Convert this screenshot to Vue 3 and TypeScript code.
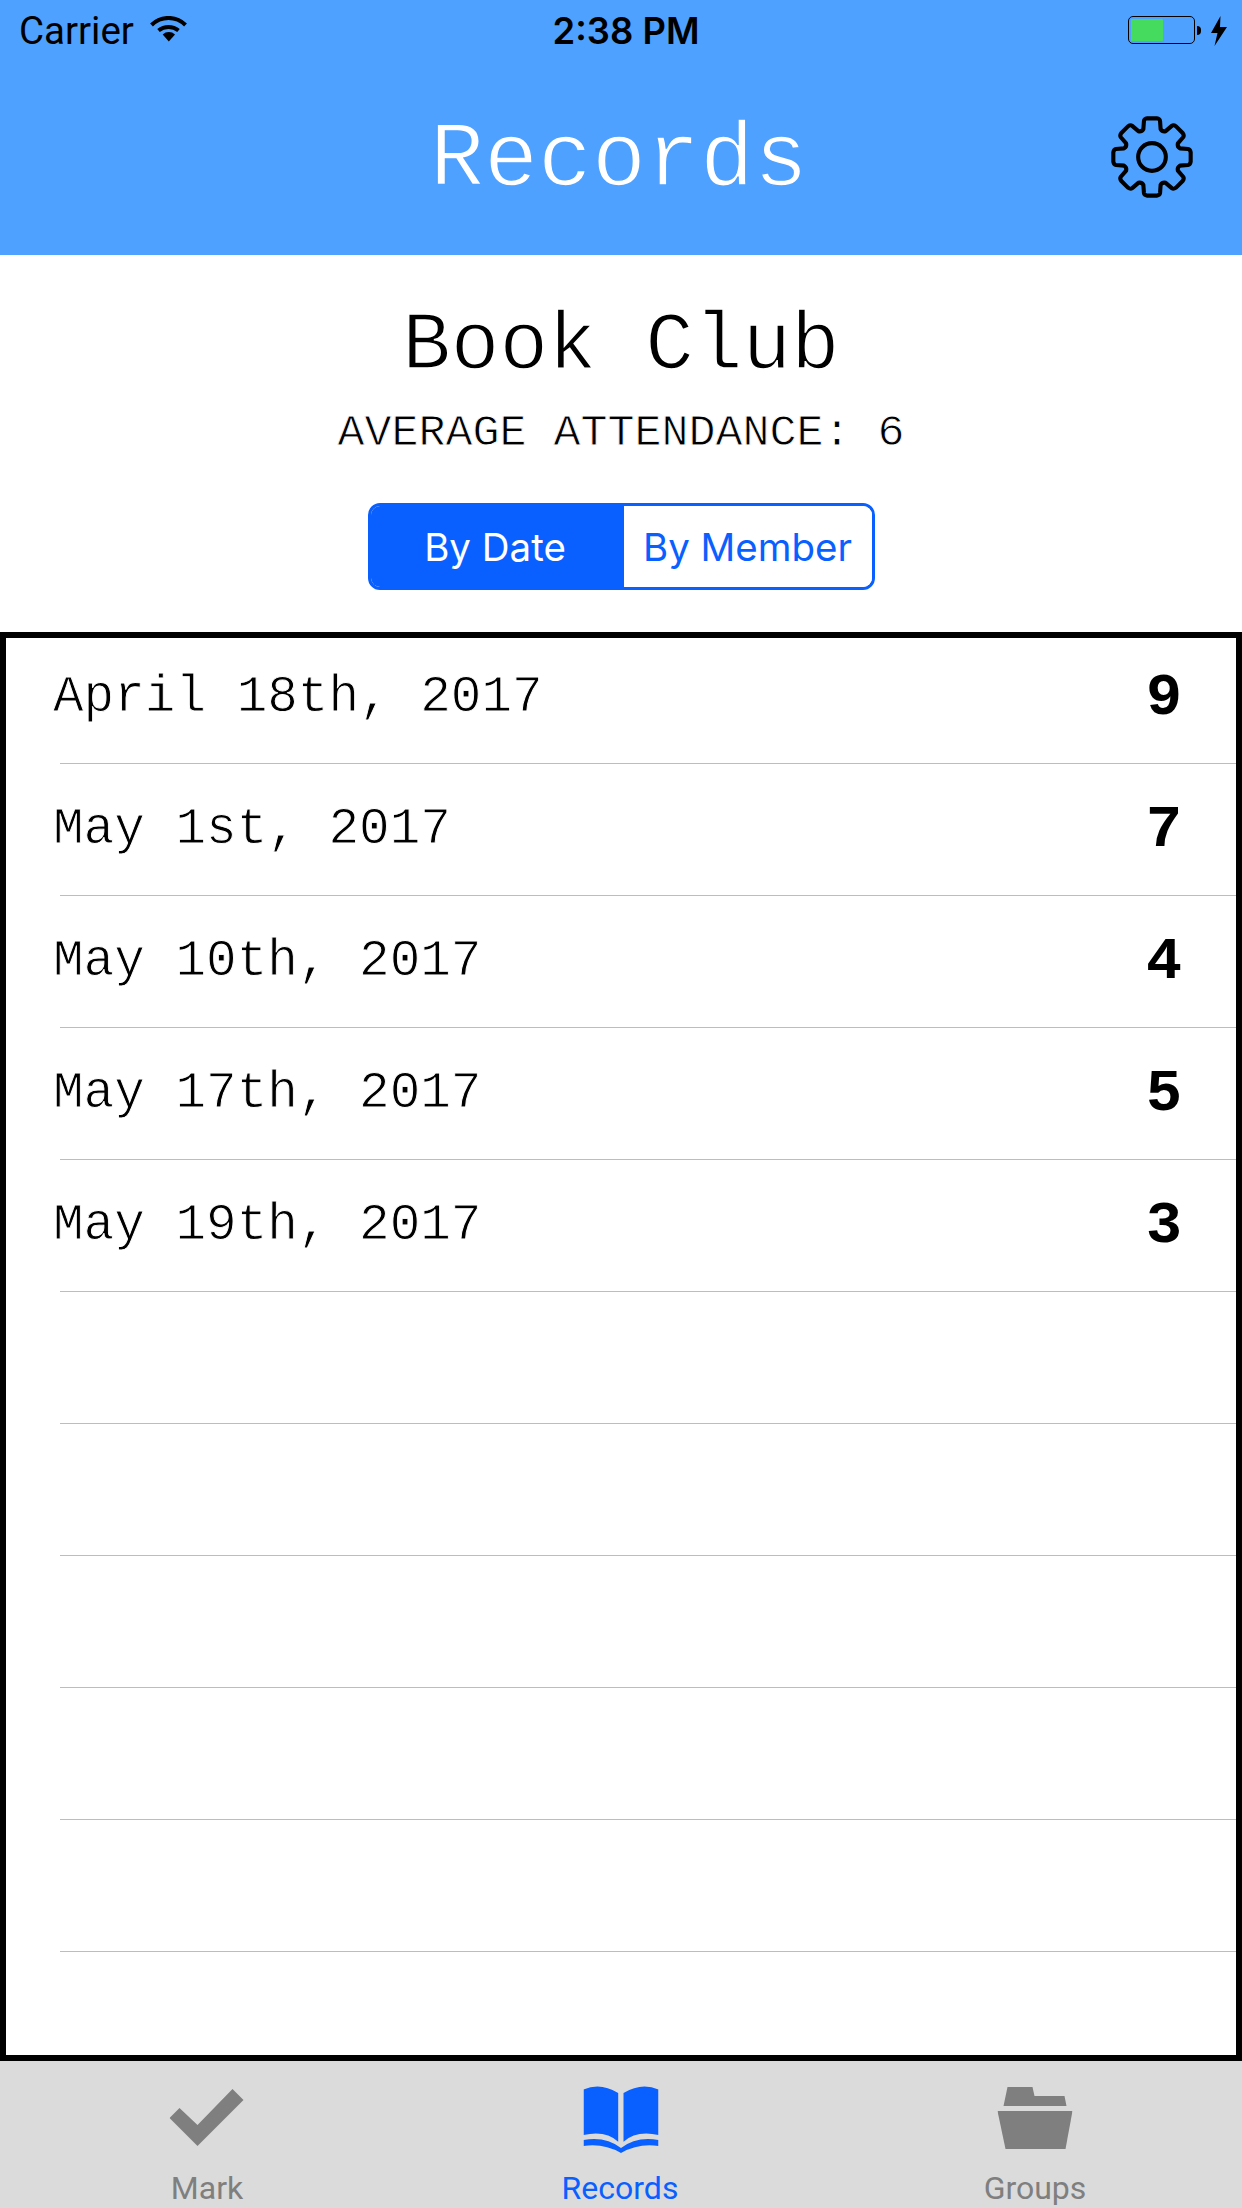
<script setup lang="ts">
interface RecordRow { date: string; count: string }
const records: RecordRow[] = [
  { date: 'April 18th, 2017', count: '9' },
  { date: 'May 1st, 2017', count: '7' },
  { date: 'May 10th, 2017', count: '4' },
  { date: 'May 17th, 2017', count: '5' },
  { date: 'May 19th, 2017', count: '3' },
  { date: '', count: '' },
  { date: '', count: '' },
  { date: '', count: '' },
  { date: '', count: '' },
  { date: '', count: '' },
  { date: '', count: '' },
]

function gearPath(): string {
  const c = 40
  const rOut = 38
  const rIn = 28.5
  const pt = (r: number, a: number) => `${(c + r * Math.sin(a)).toFixed(2)} ${(c - r * Math.cos(a)).toFixed(2)}`
  let d = ''
  for (let i = 0; i < 8; i++) {
    const a = (i * Math.PI) / 4
    const next = a + Math.PI / 4
    d += `${i === 0 ? 'M' : 'L'}${pt(rIn, a - 0.3)} L${pt(rOut - 2, a - 0.22)} Q${pt(rOut, a - 0.2)} ${pt(rOut, a - 0.12)} L${pt(rOut, a + 0.12)} Q${pt(rOut, a + 0.2)} ${pt(rOut - 2, a + 0.22)} L${pt(rIn, a + 0.3)} Q${pt(rIn - 2, (a + next) / 2)} ${pt(rIn, next - 0.3)} `
  }
  return d + 'Z'
}
const gear = gearPath()
</script>

<template>
  <div class="screen">
    <header class="header">
      <div class="status">
        <div class="status-left">
          <span>Carrier</span>
          <svg class="wifi" width="37" height="26" viewBox="0 0 37 26">
            <path d="M1.5 9 A24 24 0 0 1 35.5 9" fill="none" stroke="#000" stroke-width="4" />
            <path d="M8.5 14.5 A16 16 0 0 1 28.5 14.5" fill="none" stroke="#000" stroke-width="4" />
            <path d="M12.7 18.4 A9 9 0 0 1 25 18.4 L18.8 25.5 Z" fill="#000" />
          </svg>
        </div>
        <div class="status-time">2:38 PM</div>
        <div class="status-right">
          <div class="battery"><div class="battery-fill"></div></div>
          <div class="battery-nub"></div>
          <svg class="bolt" width="16" height="30" viewBox="0 0 16 30">
            <path d="M9.5 0 L0 17 H6.5 L3.5 30 L16 11 H9 Z" fill="#000" />
          </svg>
        </div>
      </div>
      <div class="nav">
        <h1 class="nav-title">Records</h1>
        <svg class="gear" width="82" height="82" viewBox="0 0 80 80">
          <path :d="gear" fill="none" stroke="#000" stroke-width="4" stroke-linejoin="round" />
          <circle cx="40" cy="40" r="13.5" fill="none" stroke="#000" stroke-width="4" />
        </svg>
      </div>
    </header>

    <section class="summary">
      <h2 class="group-name">Book Club</h2>
      <p class="average">AVERAGE ATTENDANCE: 6</p>
      <div class="segment">
        <div class="seg seg-on">By Date</div>
        <div class="seg seg-off">By Member</div>
      </div>
    </section>

    <section class="list">
      <div class="rows">
        <div v-for="(r, i) in records" :key="i" class="row">
          <span class="date">{{ r.date }}</span>
          <span class="count">{{ r.count }}</span>
        </div>
      </div>
    </section>

    <nav class="tabs">
      <div class="tab">
        <svg class="icon-check" width="75" height="58" viewBox="0 0 75 58">
          <path d="M0 29 L10 19 L28 36 L63 0 L74 11 L28 57 Z" fill="#7f7f7f" />
        </svg>
        <span>Mark</span>
      </div>
      <div class="tab tab-on">
        <svg class="icon-book" width="75" height="68" viewBox="0 0 75 68">
          <path d="M0 4.5 Q17 -3 34.7 8 V56.7 Q22 45 0 50 Z" fill="#0a60ff" />
          <path d="M75 4.5 Q58 -3 40 8 V56.7 Q53 45 75 50 Z" fill="#0a60ff" />
          <path d="M0 55 Q22 51 37.5 63 Q53 51 75 55 V61 Q55 58 37.5 68 Q20 58 0 61 Z" fill="#0a60ff" />
        </svg>
        <span>Records</span>
      </div>
      <div class="tab">
        <svg class="icon-folder" width="75" height="62" viewBox="0 0 75 62">
          <path d="M10 0 H35 L37 9 H67 L69 19 H6 Z" fill="#7f7f7f" />
          <path d="M0 24 H75 L68 62 H8 Z" fill="#7f7f7f" />
        </svg>
        <span>Groups</span>
      </div>
    </nav>
  </div>
</template>

<style>
html, body { margin: 0; background: #fff; }
</style>

<style scoped>
.screen {
  width: 1242px;
  height: 2208px;
  display: flex;
  flex-direction: column;
  overflow: hidden;
  background: #fff;
  font-family: "Liberation Mono", monospace;
}
.header {
  height: 255px;
  flex: none;
  background: #4fa1ff;
  display: flex;
  flex-direction: column;
}
.status {
  height: 60px;
  display: grid;
  grid-template-columns: 1fr auto 1fr;
  align-items: center;
  padding: 0 15px 0 19px;
  font-family: Roboto, sans-serif;
  font-size: 38.5px;
  color: #000;
}
.status-left { display: flex; align-items: center; gap: 16px; }
.wifi { margin-top: -2px; }
.status-time { font-family: Inter, sans-serif; font-weight: 600; font-size: 36.4px; margin: 2px 0 0 6px; }
.status-right { display: flex; align-items: center; justify-content: flex-end; }
.battery {
  width: 67px;
  height: 28px;
  box-sizing: border-box;
  border: 1.5px solid #000;
  border-radius: 5px;
  padding: 2px;
}
.battery-fill { width: 32px; height: 100%; background: #44db5e; border-radius: 1px; }
.battery-nub { width: 4px; height: 9px; margin: 0 10px 0 2px; background: #000; border-radius: 0 5px 5px 0; }
.bolt { margin-top: 2px; }
.nav {
  position: relative;
  flex: 1;
  display: flex;
  align-items: center;
  justify-content: center;
}
.nav-title {
  margin: 6px 4px 0 0;
  font-weight: 400;
  font-size: 90px;
  color: #fff;
  line-height: 1;
  -webkit-text-stroke: 1.5px #4fa1ff;
}
.gear { position: absolute; right: 49px; top: 56px; }
.summary {
  height: 377px;
  flex: none;
  display: flex;
  flex-direction: column;
  align-items: center;
  box-sizing: border-box;
  padding-top: 47px;
  color: #000;
}
.group-name {
  margin: 0;
  font-size: 81px;
  font-weight: 400;
  line-height: 90px;
  -webkit-text-stroke: 1.5px #fff;
}
.average {
  margin: 20px 0 0;
  font-size: 45px;
  line-height: 44px;
  -webkit-text-stroke: 0.8px #fff;
}
.segment {
  margin-top: 47px;
  width: 507px;
  height: 87px;
  display: flex;
  box-sizing: border-box;
  border: 3px solid #0a60ff;
  border-radius: 12px;
  overflow: hidden;
  font-family: Inter, sans-serif;
  font-size: 38.5px;
}
.seg { display: flex; align-items: center; justify-content: center; }
.seg-on { width: 253px; background: #0a60ff; color: #fff; padding-right: 4px; box-sizing: border-box; }
.seg-off { flex: 1; color: #0a60ff; background: #fff; }
.list {
  flex: 1;
  box-sizing: border-box;
  border: 6px solid #000;
  overflow: hidden;
}
.rows { margin-top: -6px; }
.row {
  height: 132px;
  box-sizing: border-box;
  margin-left: 54px;
  border-bottom: 1.5px solid #bdbdbd;
  padding-right: 54px;
  display: flex;
  align-items: center;
  justify-content: space-between;
}
.date {
  margin-left: -7px;
  font-size: 51px;
  color: #000;
  -webkit-text-stroke: 0.9px #fff;
}
.count { font-size: 60px; font-weight: 700; color: #000; }
.tabs {
  height: 147px;
  flex: none;
  display: grid;
  grid-template-columns: repeat(3, 1fr);
  background: #dbdbdb;
  font-family: Roboto, sans-serif;
  font-size: 32px;
  color: #7f7f7f;
}
.tab { position: relative; display: flex; flex-direction: column; align-items: center; justify-content: flex-end; }
.tab svg { position: absolute; left: 50%; transform: translateX(-50%); }
.icon-check { top: 28px; }
.icon-book { top: 24px; }
.icon-folder { top: 26px; }
.tab span { line-height: 36px; margin-bottom: 2px; }
.tab-on span { margin-right: 2px; }
.tab-on { color: #0a60ff; }
</style>
